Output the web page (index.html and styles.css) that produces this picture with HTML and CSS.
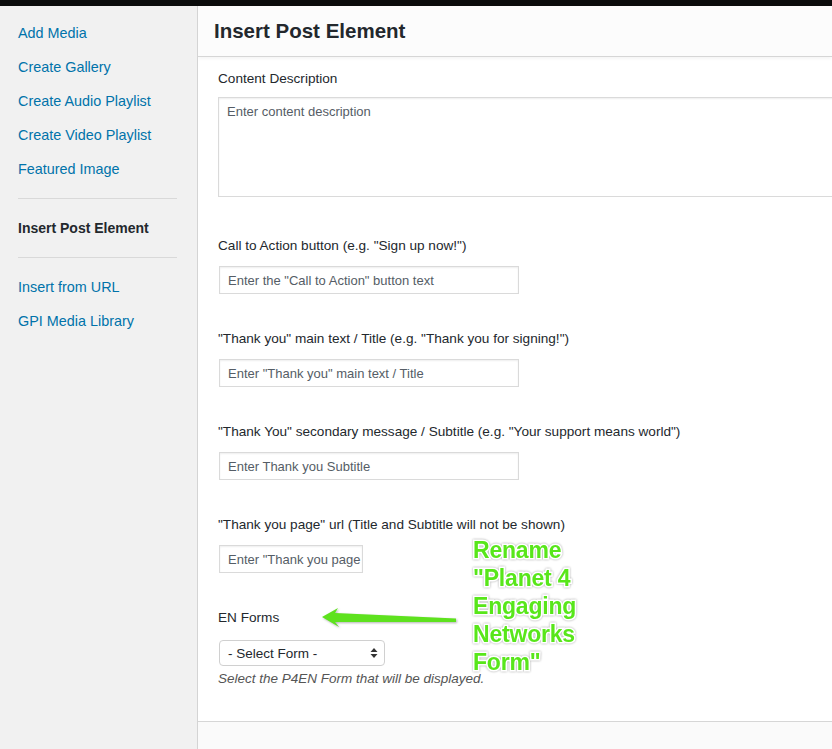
FILE: index.html
```html
<!DOCTYPE html>
<html>
<head>
<meta charset="utf-8">
<link rel="stylesheet" href="styles.css">
</head>
<body>
<div class="topbar"></div>
<div class="frame">
  <nav class="sidebar">
    <a class="menu-item" href="#">Add Media</a>
    <a class="menu-item" href="#">Create Gallery</a>
    <a class="menu-item" href="#">Create Audio Playlist</a>
    <a class="menu-item" href="#">Create Video Playlist</a>
    <a class="menu-item" href="#">Featured Image</a>
    <div class="separator"></div>
    <span class="menu-item active">Insert Post Element</span>
    <div class="separator"></div>
    <a class="menu-item" href="#">Insert from URL</a>
    <a class="menu-item" href="#">GPI Media Library</a>
  </nav>
  <main class="main">
    <header class="header"><h1 class="title">Insert Post Element</h1></header>
    <section class="content">
      <div class="field first">
        <label class="label">Content Description</label>
        <div class="textarea"><span class="ph">Enter content description</span></div>
      </div>
      <div class="field">
        <label class="label">Call to Action button (e.g. "Sign up now!")</label>
        <div class="input"><span class="ph">Enter the "Call to Action" button text</span></div>
      </div>
      <div class="field">
        <label class="label">"Thank you" main text / Title (e.g. "Thank you for signing!")</label>
        <div class="input"><span class="ph">Enter "Thank you" main text / Title</span></div>
      </div>
      <div class="field">
        <label class="label">"Thank You" secondary message / Subtitle (e.g. "Your support means world")</label>
        <div class="input"><span class="ph">Enter Thank you Subtitle</span></div>
      </div>
      <div class="field">
        <label class="label">"Thank you page" url (Title and Subtitle will not be shown)</label>
        <div class="input short"><span class="ph">Enter "Thank you page</span></div>
      </div>
      <div class="field">
        <label class="label">EN Forms</label>
        <div class="select">
          <span class="select-text">- Select Form -</span>
          <svg class="select-arrows" width="8" height="12" viewBox="0 0 8 12"><path d="M4 1 L7.5 5 L0.5 5 Z M4 11 L7.5 7 L0.5 7 Z" fill="#333"/></svg>
        </div>
        <p class="help">Select the P4EN Form that will be displayed.</p>
      </div>
    </section>
    <footer class="footer"></footer>
  </main>
</div>
<div class="note">Rename<br>"Planet 4<br>Engaging<br>Networks<br>Form"</div>
<svg class="arrow" width="150" height="30" viewBox="0 0 150 30">
  <path d="M6 13 L22 4 L19 9 L140 14.5 L140 18 L19 18 L23 23 Z" fill="#5ee21e"/>
</svg>
</body>
</html>
```

FILE: styles.css
```css
html, body {
  margin: 0;
  padding: 0;
  height: 100%;
  overflow: hidden;
}
body {
  font-family: "Liberation Sans", Arial, sans-serif;
  color: #23282d;
  background: #fff;
  position: relative;
}
.topbar {
  height: 6px;
  background: #0b0c0c;
}
.frame {
  display: flex;
  height: 743px;
}
.sidebar {
  width: 197px;
  flex: none;
  background: #f1f1f1;
  border-right: 1px solid #d4d4d4;
  padding-top: 10px;
  box-sizing: content-box;
  display: flex;
  flex-direction: column;
}
.menu-item {
  display: block;
  height: 34px;
  line-height: 34px;
  padding-left: 18px;
  font-size: 14.4px;
  color: #0073aa;
  text-decoration: none;
  white-space: nowrap;
}
.menu-item.active {
  color: #23282d;
  font-weight: bold;
  font-size: 14px;
}
.separator {
  height: 1px;
  background: #d9d9d9;
  margin: 12px 20px 12px 18px;
}
.main {
  flex: 1;
  display: flex;
  flex-direction: column;
  overflow: hidden;
  min-width: 0;
}
.header {
  height: 50px;
  flex: none;
  background: #fcfcfc;
  border-bottom: 1px solid #d6d6d6;
  box-shadow: 0 2px 3px rgba(0,0,0,0.04);
  padding-left: 16px;
}
.title {
  margin: 0;
  font-size: 20.5px;
  line-height: 50px;
  font-weight: bold;
  color: #23282d;
}
.content {
  flex: 1;
  padding: 13px 0 0 20px;
}
.field {
  margin-top: 36px;
}
.field.first {
  margin-top: 0;
}
.field.first + .field {
  margin-top: 40px;
}
.label {
  display: block;
  font-size: 13.6px;
  line-height: 18px;
  color: #23282d;
  white-space: nowrap;
  margin-bottom: 11px;
}
.field.first .label {
  margin-bottom: 9px;
}
.ph {
  font-size: 13px;
  color: #555d66;
  white-space: nowrap;
}
.textarea {
  width: 660px;
  height: 100px;
  border: 1px solid #dadada;
  box-shadow: inset 0 1px 2px rgba(0,0,0,0.07);
  padding: 5px 8px;
  box-sizing: border-box;
  line-height: 16px;
  background: #fff;
}
.input {
  width: 300px;
  height: 28px;
  margin-left: 1px;
  border: 1px solid #dadada;
  box-shadow: inset 0 1px 2px rgba(0,0,0,0.07);
  padding: 0 8px;
  box-sizing: border-box;
  line-height: 26px;
  overflow: hidden;
  background: #fff;
}
.input.short {
  width: 144px;
}
.select {
  width: 166px;
  height: 26px;
  margin: 13px 0 0 1px;
  border: 1px solid #d0d0d0;
  border-radius: 4px;
  box-sizing: border-box;
  display: flex;
  align-items: center;
  justify-content: space-between;
  padding: 0 6px 0 8px;
  background: #fff;
}
.select-text {
  font-size: 13.5px;
  color: #23282d;
}
.help {
  margin: 4px 0 0 0;
  font-size: 13.5px;
  line-height: 17px;
  font-style: italic;
  color: #555;
}
.footer {
  height: 27px;
  flex: none;
  background: #fafafa;
  border-top: 1px solid #d6d6d6;
}
.note {
  position: absolute;
  left: 473px;
  top: 536px;
  font-family: "Liberation Sans", Arial, sans-serif;
  font-weight: bold;
  font-size: 23px;
  line-height: 28px;
  color: #58e61a;
  -webkit-text-stroke: 3px #fff;
  paint-order: stroke fill;
  filter: drop-shadow(0 0 1px rgba(0,0,0,0.35));
  letter-spacing: -0.2px;
}
.arrow {
  position: absolute;
  left: 316px;
  top: 604px;
  filter: drop-shadow(1px 1.5px 1px rgba(0,0,0,0.3));
}
```
